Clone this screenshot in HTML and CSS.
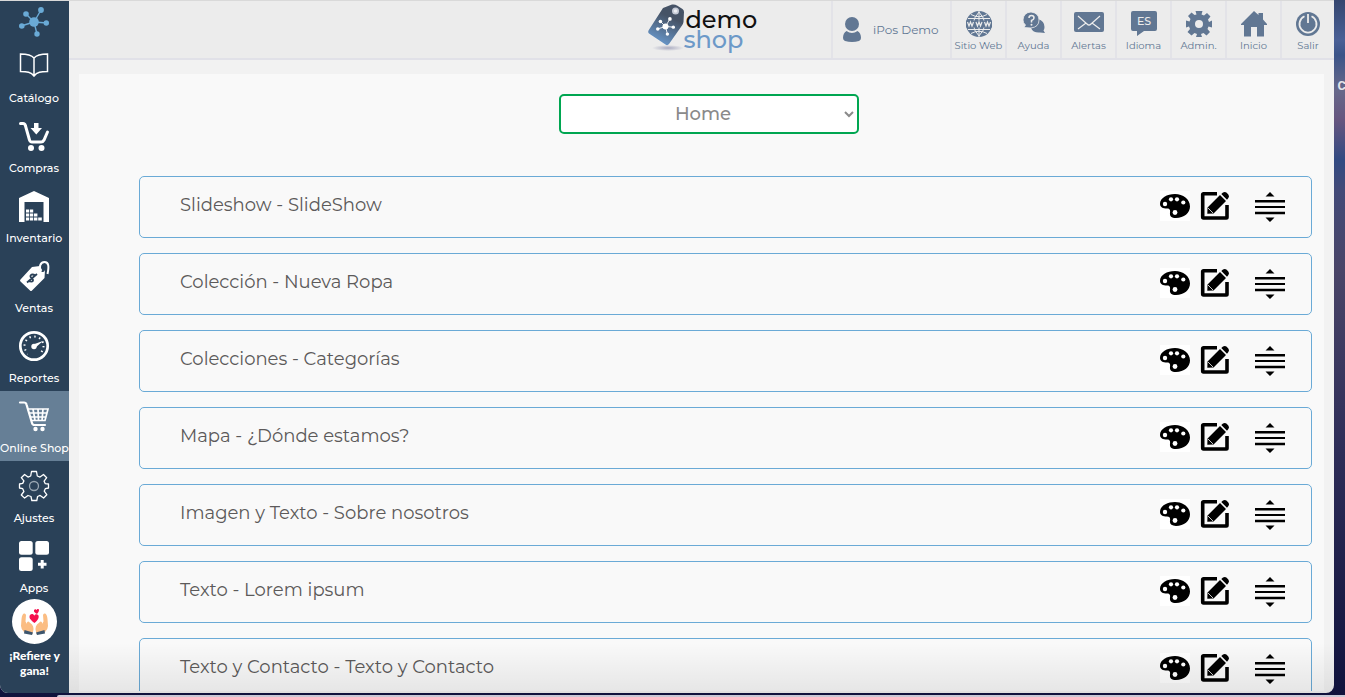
FILE: index.html
```
<!DOCTYPE html>
<html lang="es">
<head>
  <meta charset="UTF-8">
  <meta name="viewport" content="width=device-width, initial-scale=1.0">
  <title>Demo Shop - Online Shop</title>
  <link rel="stylesheet" href="styles.css">
</head>
<body>
  <!-- Iconos compartidos -->
  <svg class="sprite" aria-hidden="true">
    <symbol id="red" viewBox="0 0 30 30">
      <path d="M15 15 7 7M15 15l7-12M15 15l13 1M15 15l3 12M15 15 2 19" stroke="currentColor" stroke-width="1.4"/>
      <g fill="currentColor">
        <circle cx="15" cy="15" r="4.8"/><circle cx="7" cy="7" r="2.8"/><circle cx="22" cy="3" r="2.9"/>
        <circle cx="27.3" cy="16" r="2.7"/><circle cx="18" cy="27" r="2.7"/><circle cx="2.8" cy="19" r="2.8"/>
      </g>
    </symbol>
    <symbol id="paleta" viewBox="0 0 30 30">
      <path fill="#fff" d="M0 0h30v30H0z"/>
      <path d="M15 3C23 3 30 8 30 15.500C30 22 24 27 16 27C11.500 27 9.500 25 10 22C10.400 19 10 17.500 7 17.500C3 17.500 0 16.500 0 12.800C0 7 7 3 15 3Z"/>
      <g fill="#fff"><circle cx="5" cy="13" r="2.200"/><circle cx="11" cy="8.300" r="2.100"/><circle cx="17" cy="8.300" r="2.100"/><circle cx="23.300" cy="11.500" r="2.100"/><circle cx="15" cy="21.500" r="2.400"/></g>
    </symbol>
    <symbol id="editar" viewBox="0 0 30 30">
      <path d="M17 2.700H3.500Q2.700 2.700 2.700 3.500V26Q2.700 27 3.500 27H26.300Q27 27 27 26.300V14" fill="none" stroke="#000" stroke-width="3.600"/>
      <path d="M20 0h10v13h-4z" fill="#f9f9f9"/>
      <path d="M7.500 16.500 20 4 26 10 13.500 22.500 7.300 22.700ZM21.300 3 23 1.500Q25 .300 26.700 1.800L28.300 3.400Q29.700 5.200 28.400 7L27 8.700Z"/>
      <path d="M8 17 13 22" stroke="#f9f9f9" stroke-width=".8"/>
    </symbol>
    <symbol id="mover" viewBox="0 0 30 30">
      <path d="M15 0 19.500 4.500h-9zM15 30l-4.500-4.500h9zM0 8h30v2.400H0zM0 14h30v2H0zM0 19.800h30v2.400H0z"/>
    </symbol>
  </svg>

  <span class="desktop-text" aria-hidden="true">C</span>

  <div class="window">
    <nav class="sidebar">
      <a href="#" class="brand" aria-label="iPos"><svg><use href="#red"/></svg></a>
      <a href="#" class="side-item">
        <svg viewBox="0 0 30 30" fill="none" stroke="#fff" stroke-width="1.5"><path d="M15 7C12 3.500 8 3 1.500 3v17.500c6.500 0 10.500 .500 13.500 4.500c3-4 7-4.500 13.500-4.500V3c-6.500 0-10.500 .500-13.500 4zV25"/></svg>
        Catálogo
      </a>
      <a href="#" class="side-item">
        <svg viewBox="0 0 30 30"><path d="M1.500 2.500H4Q6 2.500 6.500 5L10.500 19Q11 21 13 21H22Q24 21 25 19L28.500 11" fill="none" stroke="#fff" stroke-width="3" stroke-linecap="round"/><path d="M15 2h4.500v5h3.500l-5.700 6.500L11.500 7H15z" fill="#fff"/><circle cx="12" cy="27" r="3" fill="#fff"/><circle cx="22.500" cy="27" r="3" fill="#fff"/></svg>
        Compras
      </a>
      <a href="#" class="side-item">
        <svg viewBox="0 0 30 30" fill="#fff"><path d="M15 0 30 7v24h-5.500V11h-19v20H0V7z"/><path d="M7 18.500h3v3H7zM10.800 18.500h3.400v3h-3.400zM7 22.500h3v3H7zM10.800 22.500h3.400v3h-3.400zM15 22.500h3.400v3H15zM7 26.500h3v3H7zM10.800 26.500h3.400v3h-3.400zM15 26.500h3.400v3H15zM19.200 26.500h3.600v3h-3.600z"/></svg>
        Inventario
      </a>
      <a href="#" class="side-item">
        <svg viewBox="0 0 30 30"><path d="M13 6 21 5Q20 9 22.500 10.500T26 9L25.500 17 13 29.500Q12 30.500 11 29.500L1.500 20.500Q.500 19.500 1.500 18.500Z" fill="#fff"/><path d="M22.500 10C19.500 7 21 1 25.500 1S30 6 28.500 13" fill="none" stroke="#fff" stroke-width="2"/><path d="M16.500 14.500C12 12 10 15 12.500 17S14.500 22 9.500 20M8 21.500 18 13" fill="none" stroke="#2a4158" stroke-width="1.800"/></svg>
        Ventas
      </a>
      <a href="#" class="side-item">
        <svg viewBox="0 0 30 30"><circle cx="15" cy="15" r="13.700" fill="none" stroke="#fff" stroke-width="2.700"/><circle cx="15" cy="15" r="9.500" fill="none" stroke="#fff" stroke-width="2" stroke-dasharray="1.400 3.575"/><path d="M9 21h12v5H9z" fill="#2a4158"/><path d="M14 13.500 24 10l-8 7z" fill="#fff"/><circle cx="15" cy="15.500" r="2.700" fill="#fff"/></svg>
        Reportes
      </a>
      <a href="#" class="side-item active">
        <svg viewBox="0 0 30 30" fill="none" stroke="#fff"><path d="M1 1.500H5Q7 1.500 7.500 3.500L13 22Q13.500 24 15.500 24H26" stroke-width="2.200" stroke-linecap="round"/><path d="M9 8H29L26 19.500H12.500M10 12H28M11 16H27M14 8l2 11.500M19 8l.500 11.500M24 8l-1 11.500" stroke-width="1.700"/><g fill="#fff" stroke="none"><circle cx="16.500" cy="28" r="2.200"/><circle cx="23.500" cy="28" r="2.200"/></g></svg>
        Online Shop
      </a>
      <a href="#" class="side-item">
        <svg viewBox="0 0 30 30" fill="none" stroke="#fff" stroke-width="1.300"><path d="M12.500 .500h5l.8 4.500 2.700 1.100 3.500-2.600 3.200 3.200-2.600 3.500L26.300 12.700l3.200.300v4l-3.200.700-1.100 2.500 2.600 3.500-3.200 3.300-3.500-2.600-2.500 1.100-.8 4h-5l-.8-4L9 24.500l-3.400 2.600L2.300 24l2.600-3.500L3.700 17.700l-3.200-.700v-4l3.200-.600 1.200-2.500L2.300 6.700l3.300-3.200L9 6.100l2.700-1.100z" stroke-linejoin="round"/><circle cx="15" cy="15" r="4.500" stroke="#9aa7b3"/></svg>
        Ajustes
      </a>
      <a href="#" class="side-item">
        <svg viewBox="0 0 30 30" fill="#fff"><rect width="13.700" height="13.700" rx="2.500"/><rect x="16.300" width="13.700" height="13.700" rx="2.500"/><rect y="16.300" width="13.700" height="13.700" rx="2.500"/><path d="M21.700 19h3v2.800h2.800v3h-2.800v2.700h-3v-2.700H19v-3h2.700z"/></svg>
        Apps
      </a>
      <a href="#" class="refer">
        <svg viewBox="0 0 45 45">
          <circle cx="22.500" cy="22.500" r="22.500" fill="#fff"/>
          <path d="M12 14.500Q10 15 9.500 20L9 27Q9 30 12 33L20 35.500Q23 29 20 25.500L16.500 22.500Q14.500 22.500 15 25L13.500 22.500 14 16Q13.500 14 12 14.500Z" fill="#fbbd83"/>
          <path d="M33 14.500Q35 15 35.500 20L36 27Q36 30 33 33L25 35.500Q22 29 25 25.500L28.500 22.500Q30.500 22.500 30 25L31.500 22.500 31 16Q31.500 14 33 14.500Z" fill="#fbbd83"/>
          <path d="M12.500 31 21 33.500 20 36 12 34.500ZM32.500 31 24 33.500 25 36 33 34.500Z" fill="#3d566e"/>
          <path d="M22.500 24C18.500 21 17.500 19.500 17.500 17.800C17.500 15 21 14 22.300 16.700C23.500 14.500 27 15 26.700 18C26.500 20 25 22 22.500 24ZM25 15C22.500 13.500 21.500 12.500 22 11.200C22.700 9.700 24.300 10.300 24.500 11.300C25 9.500 27 9.500 27 11.200Q27 13 25 15Z" fill="#f5114e"/>
        </svg>
        ¡Refiere y gana!
      </a>
    </nav>

    <div class="content">
      <header class="topbar">
        <a href="#" class="logo">
          <svg viewBox="0 0 40 48">
            <defs>
              <linearGradient id="etiqueta" x1=".7" y1="0" x2=".3" y2="1"><stop offset=".3" stop-color="#465366"/><stop offset="1" stop-color="#6a9bd0"/></linearGradient>
              <radialGradient id="sombra"><stop offset="0" stop-color="#a9abc0"/><stop offset="1" stop-color="#ececec"/></radialGradient>
            </defs>
            <ellipse cx="20" cy="44" rx="16" ry="3" fill="url(#sombra)"/>
            <path d="M15 4 24 .500Q27 0 29 1.500L34.500 5Q36 6 36 8L35.500 18Q35 20 34 21.500L21 40Q19.500 42 17.500 40.500L1 29.500Q-.500 28 .800 26Z" fill="url(#etiqueta)"/>
            <circle cx="27.500" cy="7" r="3.500" fill="#c5cad6"/><circle cx="27.500" cy="7" r="1.800" fill="#eceef2"/>
            <g color="#fff"><use href="#red" x="8" y="13" width="19" height="19"/></g>
          </svg>
          <span class="logo-text">demo<span>shop</span></span>
        </a>
        <nav class="top-menu">
          <a href="#" class="user">
            <svg viewBox="0 0 18 26"><circle cx="9" cy="7" r="7"/><path d="M3.500 14Q9 18 14.500 14Q18 16 18 21Q18 23 16 24Q9 26 2 24Q0 23 0 21Q0 16 3.500 14Z"/></svg>
            iPos Demo
          </a>
          <a href="#" class="top-item">
            <svg viewBox="0 0 26 26"><circle cx="13" cy="13" r="13"/><path d="M13 0v26M2 7.500h22M2 18.500h22M5 3.500Q13 8 21 3.500M5 22.500Q13 18 21 22.500M13 1Q1.500 13 13 25M13 1Q24.500 13 13 25" fill="none" stroke="#ececec"/><path d="M0 9.500h26v7H0z"/><path d="m1.500 11 1.500 4 1.500-4L6 15l1.500-4M10 11l1.500 4 1.500-4 1.500 4 1.500-4M18.500 11l1.500 4 1.500-4 1.500 4 1.500-4" fill="none" stroke="#ececec" stroke-width="1.200"/></svg>
            Sitio Web
          </a>
          <a href="#" class="top-item">
            <svg viewBox="0 0 26 26"><path d="M17 8Q23.500 10 23.500 16 23.500 18 22.500 19.500l1.500 2.500-5-.500Q12 22 10 17z"/><path d="M10 1Q18 2 18 9T10 17L3 16.500 4.500 14Q2 12 2 9 2.500 1.500 10 1Z" stroke="#ececec" stroke-width=".8"/><path d="M8 7Q8 4.500 10.500 4.500T13 7Q13 8.500 10.500 9.500V11.500" fill="none" stroke="#ececec" stroke-width="1.500"/><circle cx="10.500" cy="13.700" r="1" fill="#ececec"/></svg>
            Ayuda
          </a>
          <a href="#" class="top-item">
            <svg class="wide" viewBox="0 0 30 26"><rect y="1" width="30" height="20" rx="2"/><path d="M4 5 13 13Q15 15 17 13L26 5M4 18l8-6M26 18l-8-6" fill="none" stroke="#ececec" stroke-width="1.200"/></svg>
            Alertas
          </a>
          <a href="#" class="top-item">
            <svg viewBox="0 0 26 26"><path d="M2 0H24Q26 0 26 2V18Q26 20 24 20H13L6 25V20H2Q0 20 0 18V2Q0 0 2 0Z"/><text x="13" y="14" text-anchor="middle" class="lang">ES</text></svg>
            Idioma
          </a>
          <a href="#" class="top-item">
            <svg viewBox="0 0 26 26"><path fill-rule="evenodd" d="M10.500 3.500 9.500 0h7l-1 3.500 2.500 1 3-2.500 3.500 3.500-2.500 3 1 2.500L26 9.500v7l-3.500-1-1 2.500 2.500 3-3.500 3.500-3-2.500-2.500 1 1 3h-6l1-3-2.500-1-3 2.500L1.500 21 4 18l-1-2.500-3 1v-7l3.500 1 1-2.500L2 5l3.500-3.500 3 2.500zM13 9a4 4 0 1 0 0 8a4 4 0 1 0 0-8z"/></svg>
            Admin.
          </a>
          <a href="#" class="top-item">
            <svg viewBox="0 0 26 26"><path d="M13 0 17.500 4V2H22V8.500L26 13V14H23V25.500H16V16H10V25.500H3V14H0V13Z"/></svg>
            Inicio
          </a>
          <a href="#" class="top-item last">
            <svg viewBox="0 0 26 26"><circle cx="13" cy="13" r="12"/><path d="M9.500 5.300A8.500 8.500 0 1 0 16.500 5.300M13 3V12" fill="none" stroke="#ececec" stroke-width="1.800"/></svg>
            Salir
          </a>
        </nav>
      </header>

      <main class="panel">
        <div class="page-select">
          <select aria-label="Página">
            <option>Home</option>
          </select>
        </div>
        <ul class="sections" id="sections"></ul>
      </main>
    </div>
  </div>
  <div class="dock"></div>

<script>
  var secciones = [
    'Slideshow - SlideShow',
    'Colección - Nueva Ropa',
    'Colecciones - Categorías',
    'Mapa - ¿Dónde estamos?',
    'Imagen y Texto - Sobre nosotros',
    'Texto - Lorem ipsum',
    'Texto y Contacto - Texto y Contacto'
  ];

  function boton(icono, titulo) {
    return '<button type="button" class="' + icono + '" aria-label="' + titulo + '"><svg><use href="#' + icono + '"/></svg></button>';
  }

  // Lista de secciones de la página
  document.getElementById('sections').innerHTML = secciones.map(function(nombre) {
    return '<li class="section"><span class="name">' + nombre + '</span>' +
      boton('paleta', 'Colores') + boton('editar', 'Editar') + boton('mover', 'Mover') + '</li>';
  }).join('');
</script>
</body>
</html>
```
FILE: styles.css
```
* {
  box-sizing: border-box;
}
body {
  margin: 0;
  height: 100vh;
  display: flex;
  flex-direction: column;
  overflow: hidden;
  font-family: Montserrat, Inter, sans-serif;
  background: linear-gradient(#35466f 0, #4a6096 40px, #3b5488 55px, #67688a 90px, #66557f 120px, #324a82 160px, #434a78 190px, #4a4568 270px, #2e2d58 450px, #10123c 100%);
}
a {
  color: inherit;
  text-decoration: none;
}
svg {
  display: block;
}
.sprite {
  position: absolute;
  width: 0;
  height: 0;
}
.desktop-text {
  position: absolute;
  top: 78px;
  right: -1px;
  font-family: Roboto, sans-serif;
  font-size: 13px;
  line-height: 16px;
  font-weight: 700;
  color: #e4e4ea;
}
.window {
  flex: 1;
  min-height: 0;
  display: flex;
  margin-right: 11px;
  border-top: 1px solid #d9d9d9;
  border-radius: 0 0 8px 8px;
  background-color: #f2f2f2;
  overflow: hidden;
  position: relative;
}
.window::after {
  content: "";
  position: absolute;
  left: 69px;
  right: 0;
  bottom: 0;
  height: 50px;
  background: linear-gradient(rgba(0, 0, 0, 0), rgba(0, 0, 0, 0.08));
  pointer-events: none;
}
.dock {
  height: 2px;
  margin: 2px 0 0 57px;
  border-radius: 4px 0 0 0;
  background-color: #c9c8d6;
}

/* Menú lateral */
.sidebar {
  width: 69px;
  flex-shrink: 0;
  background-color: #2a4158;
  color: #fff;
}
.brand {
  display: block;
  height: 40px;
  padding: 6px 1px 0 0;
  color: #6aaad6;
}
.brand svg,
.side-item svg {
  width: 30px;
  height: 30px;
  margin: 0 auto;
  overflow: visible;
}
.side-item {
  display: block;
  height: 70px;
  padding: 10px 1px 0 0;
  font-size: 11px;
  line-height: 16px;
  font-weight: 500;
  text-align: center;
  white-space: nowrap;
}
.side-item svg {
  margin-bottom: 9px;
}
.side-item.active {
  background-color: #667f96;
}
.refer {
  display: block;
  margin-top: -2px;
  font-family: Lato, sans-serif;
  font-size: 12px;
  line-height: 15px;
  font-weight: 900;
  text-align: center;
}
.refer svg {
  width: 45px;
  height: 45px;
  margin: 0 auto 4px;
}

/* Barra superior */
.content {
  flex: 1;
  min-width: 0;
  display: flex;
  flex-direction: column;
}
.topbar {
  display: grid;
  grid-template-columns: 1fr auto 1fr;
  height: 59px;
  flex-shrink: 0;
  background-color: #ececec;
  border-bottom: 2px solid #e1e1e8;
  color: #617793;
}
.logo {
  grid-column: 2;
  display: flex;
  padding-top: 3px;
}
.logo svg {
  width: 40px;
  height: 48px;
}
.logo-text {
  width: 70px;
  margin-left: -2px;
  padding-top: 6px;
  font-size: 24px;
  line-height: 20px;
  font-weight: 500;
  color: #111;
}
.logo-text span {
  display: block;
  margin-left: -2px;
  color: #6c99c8;
}
.top-menu {
  display: flex;
  justify-self: end;
}
.user {
  display: flex;
  align-items: center;
  gap: 12px;
  width: 119px;
  padding-left: 10px;
  border-left: 2px solid #e3e3e8;
  font-size: 12px;
  white-space: nowrap;
}
.user svg {
  width: 18px;
  height: 26px;
}
.top-menu svg {
  fill: #617793;
}
.top-item {
  width: 55px;
  padding-top: 10px;
  border-left: 2px solid #e3e3e8;
  font-size: 10px;
  line-height: 14px;
  text-align: center;
  white-space: nowrap;
}
.top-item.last {
  width: 54px;
}
.top-item svg {
  width: 26px;
  height: 26px;
  margin: 0 auto 2px;
}
.top-item svg.wide {
  width: 30px;
}
.top-item .lang {
  font-size: 11px;
  font-weight: 500;
  fill: #ececec;
}

/* Secciones */
.panel {
  flex: 1;
  min-height: 0;
  margin: 14px 10px 2px;
  padding: 20px 12px 0 60px;
  background-color: #f9f9f9;
  overflow: hidden;
}
.page-select {
  display: flex;
  justify-content: center;
  margin-right: 33px;
}
.page-select select {
  width: 300px;
  height: 40px;
  border: 2px solid #00a651;
  border-radius: 5px;
  background-color: #fff;
  color: #8a8a8a;
  font-family: inherit;
  font-size: 18px;
  font-weight: 500;
  text-align: center;
  text-align-last: center;
}
.sections {
  display: grid;
  gap: 15px;
  margin: 42px 0 0;
  padding: 0;
  list-style: none;
}
.section {
  display: flex;
  align-items: center;
  height: 62px;
  padding: 0 26px 0 40px;
  border: 1px solid #6aaad6;
  border-radius: 5px;
}
.section .name {
  flex: 1;
  padding-bottom: 4px;
  font-size: 18px;
  line-height: 24px;
  color: #5c5a5a;
}
.section button {
  padding: 0;
  border: none;
  background: none;
  cursor: pointer;
}
.section button svg {
  width: 30px;
  height: 30px;
}
.section .paleta,
.section .editar {
  margin-bottom: 2px;
}
.section .editar {
  margin-left: 10px;
}
.section .mover {
  margin-left: 25px;
}
```
